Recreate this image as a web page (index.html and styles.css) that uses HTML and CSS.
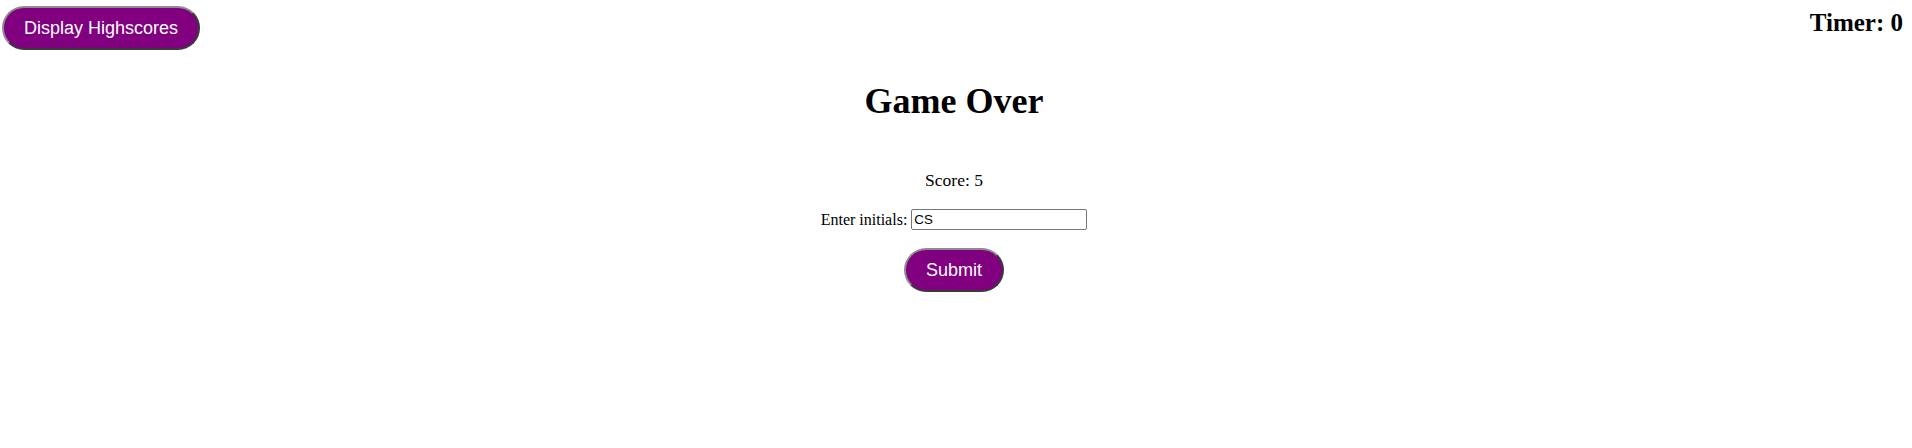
FILE: index.html
```html
<!DOCTYPE html>
<html lang="en">
<head>
<meta charset="utf-8">
<title>Quiz</title>
<link rel="stylesheet" href="styles.css">
</head>
<body>
<header class="topbar">
  <button class="btn btn-highscores" type="button">Display Highscores</button>
  <h2 class="timer">Timer: 0</h2>
</header>
<main class="game-over">
  <h1 class="title">Game Over</h1>
  <p class="score">Score: 5</p>
  <div class="initials">
    <label class="initials-label" for="initials">Enter initials:</label>
    <input class="initials-input" id="initials" type="text" value="CS">
  </div>
  <button class="btn btn-submit" type="button">Submit</button>
</main>
</body>
</html>
```

FILE: styles.css
```css
html, body {
  margin: 0;
  padding: 0;
  background: #ffffff;
  color: #000000;
  font-family: "Liberation Serif", "Times New Roman", serif;
}

.topbar {
  display: flex;
  justify-content: space-between;
  align-items: flex-start;
  height: 50px;
}

.btn {
  background: #800080;
  color: #ffffff;
  font-family: "Liberation Sans", Arial, sans-serif;
  font-size: 18px;
  line-height: 20px;
  white-space: nowrap;
  border-width: 2px;
  border-style: solid;
  border-color: #8c8c8c #3a3a3a #3a3a3a #8c8c8c;
  border-radius: 22px;
  cursor: pointer;
  box-sizing: border-box;
  height: 44px;
}

.btn-highscores {
  margin: 6px 0 0 2px;
  padding: 10px 20px;
}

.timer {
  margin: 9px 9px 0 0;
  font-size: 25px;
  font-weight: bold;
  line-height: 28px;
}

.game-over {
  display: flex;
  flex-direction: column;
  align-items: center;
  padding-right: 4px;
}

.title {
  margin: 31px 0 0;
  font-size: 36px;
  font-weight: bold;
  line-height: 40px;
}

.score {
  margin: 49px 0 0;
  font-size: 17.5px;
  line-height: 20px;
}

.initials {
  display: flex;
  align-items: center;
  gap: 4px;
  margin-top: 19px;
  height: 21px;
}

.initials-label {
  font-size: 16px;
  line-height: 18px;
  padding-top: 1px;
}

.initials-input {
  box-sizing: border-box;
  width: 176px;
  height: 21px;
  margin: 0;
  padding: 1px 2px;
  border: 1px solid #767676;
  border-radius: 2px;
  font-family: "Liberation Sans", Arial, sans-serif;
  font-size: 13.33px;
  color: #000000;
  background: #ffffff;
}

.btn-submit {
  margin-top: 18px;
  padding: 10px 20px;
}
```
